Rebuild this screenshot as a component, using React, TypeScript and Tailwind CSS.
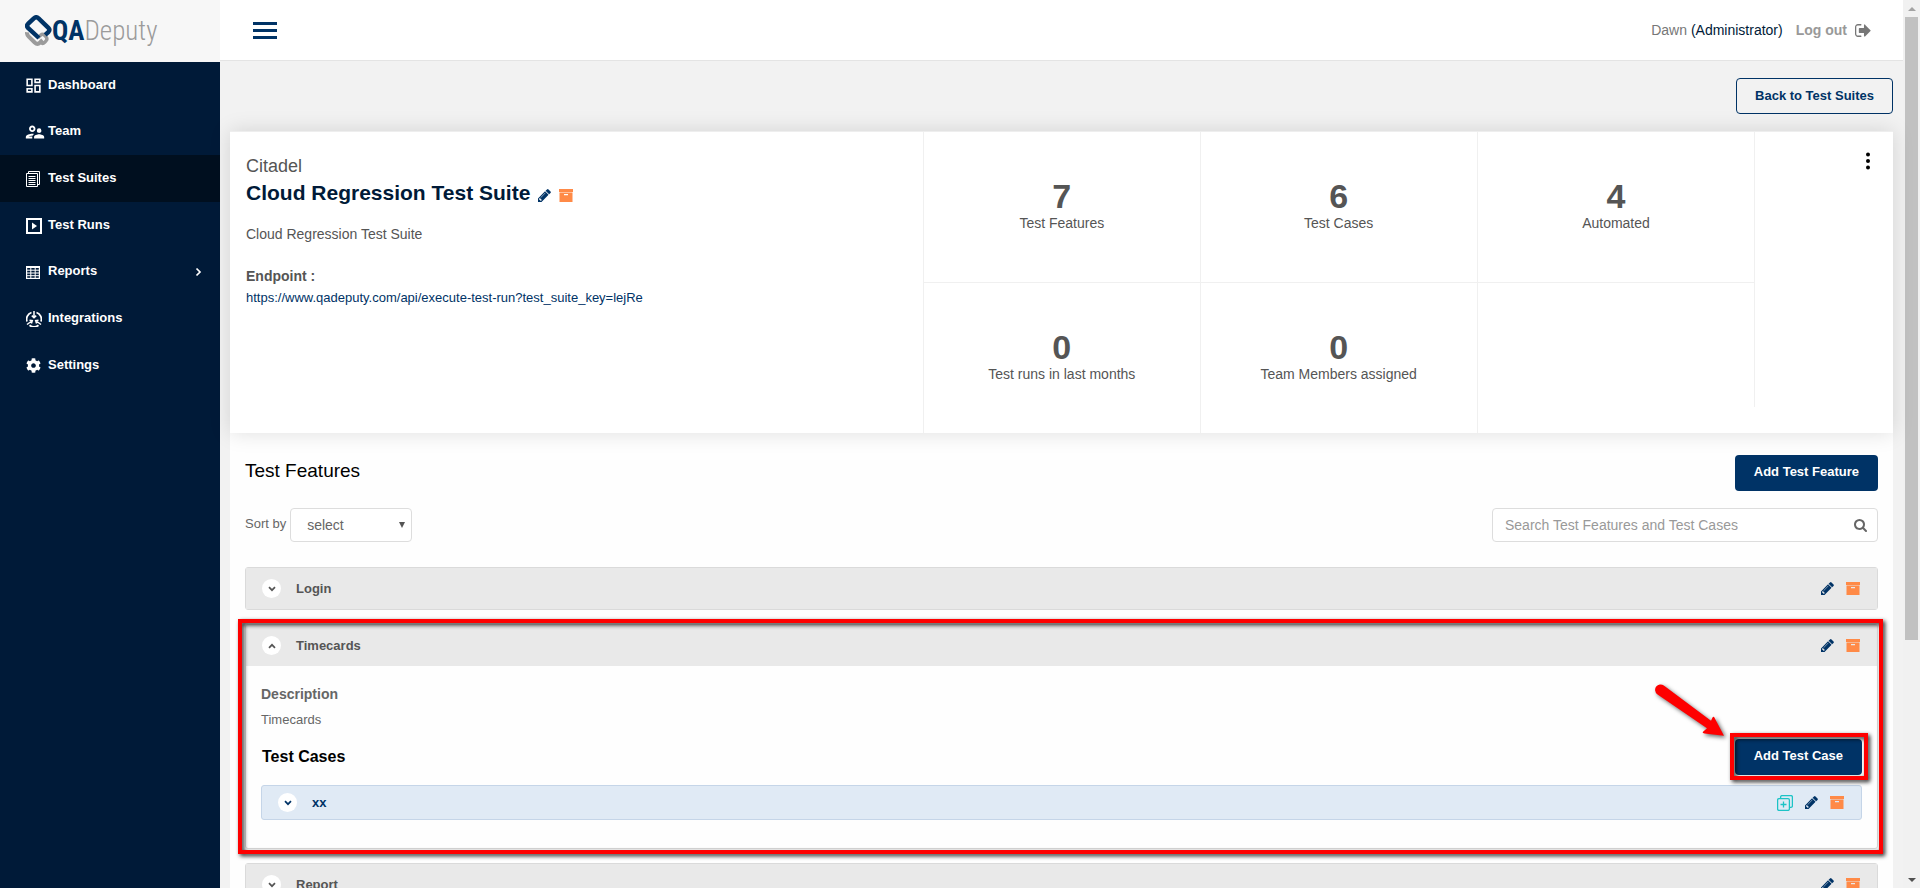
import type { ReactNode } from "react";
import { FaCog } from "react-icons/fa";
import { MdOutlineDashboard, MdOutlineSupervisorAccount } from "react-icons/md";

function PencilIcon() {
  return (
    <svg viewBox="128 140 1536 1536" className="size-[13px] fill-[#003366]" aria-hidden="true">
      <path d="M491 1536l91-91-235-235-91 91v107h128v128h107zm523-928q0-22-22-22-10 0-17 7l-542 542q-7 7-7 17 0 22 22 22 10 0 17-7l542-542q7-7 7-17zm-54-192l416 416-832 832h-416v-416zm683 96q0 53-37 90l-166 166-416-416 166-165q36-38 90-38 53 0 91 38l235 234q37 39 37 91z" />
    </svg>
  );
}

function ArchiveIcon() {
  return (
    <svg viewBox="0 0 14 13" className="h-[13px] w-[14px] fill-[#ff8a47]" aria-hidden="true">
      <path d="M0 0h14v3H0z" />
      <path fillRule="evenodd" d="M.5 4h13v9H.5zM5 5v1.2h4V5z" />
      <path opacity=".55" d="M.5 3h13v1H.5z" />
    </svg>
  );
}

function DuplicateIcon() {
  return (
    <svg viewBox="0 0 16 16" className="size-4 fill-none stroke-[#1cc3c6]" strokeWidth="1.3" aria-hidden="true">
      <rect x=".6" y="3.6" width="11.8" height="11.8" rx="1.4" />
      <path d="M3.6 3.6V2A1.4 1.4 0 0 1 5 .6h9A1.4 1.4 0 0 1 15.4 2v9a1.4 1.4 0 0 1-1.4 1.4h-1.6M6.500 6.500v6M3.500 9.500h6" />
    </svg>
  );
}

function SearchIcon() {
  return (
    <svg viewBox="64 128 1664 1664" className="size-[13px] fill-[#666]" aria-hidden="true">
      <path d="M1216 832q0-185-131.500-316.500t-316.500-131.500-316.500 131.500-131.500 316.500 131.500 316.500 316.500 131.500 316.500-131.500 131.500-316.500zm512 832q0 52-38 90t-90 38q-54 0-90-38l-343-342q-179 124-399 124-143 0-273.500-55.500t-225-150-150-225-55.500-273.500 55.500-273.500 150-225 225-150 273.500-55.500 273.500 55.500 225 150 150 225 55.500 273.500q0 220-124 399l343 343q37 37 37 90z" />
    </svg>
  );
}

function LogoutIcon() {
  return (
    <svg viewBox="64 256 1600 1280" className="h-[13px] w-4 fill-[#777]" aria-hidden="true">
      <path d="M704 1440q0 4 1 20t.5 26.500-3 23.500-10 19.500-20.500 6.500h-320q-119 0-203.500-84.500t-84.500-203.500v-704q0-119 84.500-203.500t203.500-84.500h320q13 0 22.500 9.500t9.500 22.500q0 4 1 20t.5 26.500-3 23.500-10 19.500-20.500 6.500h-320q-66 0-113 47t-47 113v704q0 66 47 113t113 47h312l11.500 1 11.500 3 8 5.500 7 9 2 13.500zm928-544q0 26-19 45l-544 544q-19 19-45 19t-45-19-19-45v-288h-448q-26 0-45-19t-19-45v-384q0-26 19-45t45-19h448v-288q0-26 19-45t45-19 45 19 19 45z" />
    </svg>
  );
}

function SuitesIcon() {
  return (
    <svg viewBox="0 0 15 16" className="h-4 w-[15px] fill-none stroke-white" aria-hidden="true">
      <path d="M2.500 2.500V.5h11v13h-2M.5 2.500h11v13H.5z" />
      <path d="M2.500 5.500h7M2.500 7.500h7M2.500 9.500h7M2.500 11.500h7M2.500 13.500h7" />
    </svg>
  );
}

function RunsIcon() {
  return (
    <svg viewBox="0 0 16 16" className="size-4" aria-hidden="true">
      <rect x="1" y="1" width="14" height="14" fill="none" stroke="#fff" strokeWidth="2" />
      <path d="M6 4.500v7L11 8z" fill="#fff" />
    </svg>
  );
}

function ReportsIcon() {
  return (
    <svg viewBox="0 0 14 13" className="h-[13px] w-[14px] fill-none stroke-white" aria-hidden="true">
      <rect x=".6" y=".6" width="12.800" height="11.800" strokeWidth="1.200" />
      <path d="M0 1.200h14" strokeWidth="1.600" />
      <path d="M0 4.200h14M0 7h14M0 9.700h14M4.800 1v12M9.200 1v12" />
    </svg>
  );
}

function IntegrationsIcon() {
  return (
    <svg viewBox="0 0 16 16" className="size-4 fill-none stroke-white" strokeWidth="1.800" aria-hidden="true">
      <path d="M1 10.500A7 7 0 0 1 5.500 1.500M10.500 1.500A7 7 0 0 1 15 10.500M3.500 14.200a7.200 7.200 0 0 0 9 0" />
      <path d="M8 0v6M5.800 4.600 8 6.800l2.200-2.200" strokeWidth="1.500" />
      <path d="M1 13.500 5.800 10M3.500 9.300l2.800.3-.9 2.800M15 13.500 10.200 10M12.500 9.300l-2.800.3.9 2.800" strokeWidth="1.500" />
    </svg>
  );
}

function Chevron({ direction }: { direction: "up" | "down" | "right" }) {
  const paths = { down: "M1 1.200 4 4.200 7 1.200", up: "M1 4.800 4 1.800 7 4.800", right: "M2.500-.5 6 3 2.500 6.500" };
  return (
    <svg viewBox="0 0 8 6" className="h-[6px] w-2 overflow-visible fill-none stroke-current" strokeWidth="1.700" aria-hidden="true">
      <path d={paths[direction]} />
    </svg>
  );
}

function LogoMark() {
  return (
    <svg viewBox="0 0 27 32" className="h-8 w-[27px] fill-none" aria-hidden="true">
      <path
        d="M2 17.200c-.2 1.700.3 2.900 1.500 4.100l6.200 6.200c1.600 1.500 3.700 1.600 5.200.1l2.700-2.600"
        stroke="#9b9b9b"
        strokeWidth="4"
      />
      <path
        d="M12.800 22.800l2.800-2.600c1.200-1.100 2.600-1.100 3.800 0l1.600 1.700c1.200 1.300 1.200 2.700 0 4l-1.300 1.400c-1.200 1.200-2.700 1.300-3.900.2l-1.600-1.500"
        stroke="#9b9b9b"
        strokeWidth="3.400"
      />
      <path
        d="M14 23 3 12.900c-1.100-1.200-1.100-2.800 0-4L8.800 3.300c1.500-1.300 3.300-1.300 4.800 0l9.800 9.500c1.300 1.300 1.300 2.700.1 4.100l-3.300 3"
        stroke="#003366"
        strokeWidth="4.400"
      />
    </svg>
  );
}

const navItems: { label: string; icon: ReactNode; active?: boolean; expandable?: boolean }[] = [
  { label: "Dashboard", icon: <MdOutlineDashboard className="-ml-0.5 size-[19px]" /> },
  { label: "Team", icon: <MdOutlineSupervisorAccount className="-ml-0.5 size-[22px] shrink-0" /> },
  { label: "Test Suites", icon: <SuitesIcon />, active: true },
  { label: "Test Runs", icon: <RunsIcon /> },
  { label: "Reports", icon: <ReportsIcon />, expandable: true },
  { label: "Integrations", icon: <IntegrationsIcon /> },
  { label: "Settings", icon: <FaCog className="size-[15px]" /> },
];

const stats = [
  { value: 7, label: "Test Features" },
  { value: 6, label: "Test Cases" },
  { value: 4, label: "Automated" },
  { value: 0, label: "Test runs in last months" },
  { value: 0, label: "Team Members assigned" },
];

function Sidebar() {
  return (
    <aside className="w-[220px] shrink-0 bg-[#001a38]">
      <a href="#home" aria-label="QADeputy" className="flex h-[62px] items-center bg-[#f7f7f7] pl-[25px]">
        <LogoMark />
        <span className="font-['Roboto_Condensed','Liberation_Sans_Narrow',sans-serif] text-[27px] leading-8 font-light whitespace-nowrap text-[#9b9b9b]">
          <b className="font-bold text-[#003366]">QA</b>Deputy
        </span>
      </a>
      <nav className="flex h-[327px] flex-col">
        {navItems.map((item) => (
          <a
            key={item.label}
            href={`#${item.label}`}
            className={`flex flex-1 items-center pr-[18px] pl-[26px] text-[13px] font-bold text-white ${item.active ? "bg-[#000f1f]" : ""}`}
          >
            <span className="flex w-[22px] items-center">{item.icon}</span>
            <span className="pb-0.5">{item.label}</span>
            {item.expandable && (
              <span className="ml-auto">
                <Chevron direction="right" />
              </span>
            )}
          </a>
        ))}
      </nav>
    </aside>
  );
}

function EditActions({ duplicate }: { duplicate?: boolean }) {
  return (
    <div className="ml-auto flex items-center gap-3">
      {duplicate && (
        <button type="button" aria-label="Duplicate">
          <DuplicateIcon />
        </button>
      )}
      <button type="button" aria-label="Edit">
        <PencilIcon />
      </button>
      <button type="button" aria-label="Archive">
        <ArchiveIcon />
      </button>
    </div>
  );
}

function FeatureHeader({ name, open }: { name: string; open?: boolean }) {
  return (
    <div className="flex h-[41px] items-center bg-[#e9e9e9] pr-[17px] pl-4 text-[#555]">
      <button type="button" aria-label={`Toggle ${name}`} className="grid size-[19px] place-items-center rounded-full bg-white">
        <Chevron direction={open ? "up" : "down"} />
      </button>
      <h3 className="ml-[15px] text-[13px] font-bold">{name}</h3>
      <EditActions />
    </div>
  );
}

function Feature({ name, open, children }: { name: string; open?: boolean; children?: ReactNode }) {
  return (
    <article className="relative rounded-[3px] border border-[#dadada]">
      <FeatureHeader name={name} open={open} />
      {children}
    </article>
  );
}

function SuiteSummary() {
  return (
    <section className="relative grid grid-cols-12 border-t border-[#eee] bg-white shadow-[0_0_20px_rgba(0,0,0,0.13)]">
      <div className="col-span-5 pt-[21px] pl-4 text-sm leading-5 text-[#555]">
        <p className="text-lg leading-[26px]">Citadel</p>
        <div className="flex items-center gap-2">
          <h1 className="text-[21px] leading-7 font-bold text-[#001a38]">Cloud Regression Test Suite</h1>
          <button type="button" aria-label="Edit suite" className="pt-1">
            <PencilIcon />
          </button>
          <button type="button" aria-label="Archive suite" className="pt-1">
            <ArchiveIcon />
          </button>
        </div>
        <p className="mt-[17px]">Cloud Regression Test Suite</p>
        <p className="mt-[22px] font-bold">Endpoint :</p>
        <a href="#endpoint" className="mt-0.5 block text-[13px] text-[#003366]">
          https://www.qadeputy.com/api/execute-test-run?test_suite_key=lejRe
        </a>
      </div>
      <div className="col-span-6 grid grid-cols-3 grid-rows-[151px_150px] border-l border-[#f0f0f0]">
        {stats.map((stat, index) => (
          <div
            key={stat.label}
            className={`flex flex-col items-center justify-center border-[#f0f0f0] pb-0.5 text-[#555] ${index < 3 ? "border-b" : ""} ${index === 2 ? "" : "border-r"}`}
          >
            <strong className="text-[34px] leading-[34px]">{stat.value}</strong>
            <span className="text-sm leading-5">{stat.label}</span>
          </div>
        ))}
      </div>
      <div className="h-[275px] border-l border-[#f0f0f0] pt-5 pr-[19px]">
        <button type="button" aria-label="More actions" className="ml-auto block px-1">
          <svg viewBox="0 0 4 18" className="h-[18px] w-1" aria-hidden="true">
            <circle cx="2" cy="2.500" r="2" />
            <circle cx="2" cy="9" r="2" />
            <circle cx="2" cy="15.500" r="2" />
          </svg>
        </button>
      </div>
    </section>
  );
}

const primaryButton = "h-9 rounded-[4px] bg-[#003366] px-[19px] pb-0.5 text-[13px] font-bold text-white";

function AddTestCase() {
  return (
    <div className="relative ml-auto">
      <button type="button" className={primaryButton}>
        Add Test Case
      </button>
      <div className="pointer-events-none absolute -top-1.5 -right-1.5 -bottom-[5px] -left-[5px] border-4 border-[#fe0000] drop-shadow-[2px_2px_2px_rgba(0,0,0,0.85)]" />
      <svg
        viewBox="0 0 76 60"
        className="pointer-events-none absolute -top-14 -left-[81px] h-[60px] w-[76px] overflow-visible fill-[#fe0000] drop-shadow-[2px_2px_2px_rgba(0,0,0,0.6)]"
        aria-hidden="true"
      >
        <path d="M9.800 2.600 57 37.700l1.500-3.200c.6-1 1.700-.9 2 .2L70 52.700 50.500 50.400c-1.600-.2-2.400-1-1.200-2L53 45.300 3.200 11.200A5.300 5.300 0 0 1 9.800 2.600Z" />
      </svg>
    </div>
  );
}

function FeatureList() {
  return (
    <section className="flex-1 bg-[#fefefe] pt-[22px] pr-[15px] pl-[15px]">
      <div className="flex items-center justify-between">
        <h2 className="pb-1 text-[19px] leading-6 text-black">Test Features</h2>
        <button type="button" className={primaryButton}>
          Add Test Feature
        </button>
      </div>
      <div className="mt-[17px] flex justify-between">
        <div className="flex items-center">
          <label htmlFor="sort" className="pb-0.5 text-[13px] text-[#666]">
            Sort by
          </label>
          <div className="relative ml-1">
            <select
              id="sort"
              className="h-[34px] w-[122px] appearance-none rounded-[4px] border border-[#ddd] bg-white pl-4 text-sm text-[#666]"
            >
              <option>select</option>
            </select>
            <svg viewBox="0 0 6 6" className="pointer-events-none absolute top-[14px] right-[7px] size-1.5 fill-[#555]" aria-hidden="true">
              <path d="M0 0h6L3 6z" />
            </svg>
          </div>
        </div>
        <div className="flex h-[34px] w-[386px] items-center rounded-[4px] border border-[#ddd] bg-white pr-[10px] pl-3">
          <input
            type="text"
            aria-label="Search Test Features and Test Cases"
            placeholder="Search Test Features and Test Cases"
            className="min-w-0 flex-1 text-sm outline-none placeholder:text-[#999]"
          />
          <button type="button" aria-label="Search">
            <SearchIcon />
          </button>
        </div>
      </div>
      <div className="mt-[25px] flex flex-col gap-[14px]">
        <Feature name="Login" />
        <Feature name="Timecards" open>
          <div className="px-[15px] pt-[18px] pb-7 text-[#666]">
            <h4 className="text-sm leading-5 font-bold">Description</h4>
            <p className="mt-1.5 text-[13px] leading-5">Timecards</p>
            <div className="mt-[9px] flex items-center">
              <h4 className="pl-px text-base font-bold text-black">Test Cases</h4>
              <AddTestCase />
            </div>
            <div className="mt-2.5 flex h-[35px] items-center rounded-[3px] border border-[#c5d5e8] bg-[#e0eaf5] pr-[17px] pl-4 text-[#003366]">
              <button type="button" aria-label="Toggle xx" className="grid size-[19px] place-items-center rounded-full bg-white">
                <Chevron direction="down" />
              </button>
              <span className="ml-[15px] text-[13px] font-bold">xx</span>
              <EditActions duplicate />
            </div>
          </div>
          <div className="pointer-events-none absolute -top-1.5 -right-1.5 -bottom-1.5 -left-2 border-4 border-[#fe0000] drop-shadow-[2px_2px_2px_rgba(0,0,0,0.85)]" />
        </Feature>
        <Feature name="Report" />
      </div>
    </section>
  );
}

function ScrollRail() {
  return (
    <div className="flex w-[17px] shrink-0 flex-col items-center justify-between bg-[#f1f1f1]" aria-hidden="true">
      <div className="grid h-[17px] place-items-center">
        <svg viewBox="0 0 8 4" className="h-1 w-2 fill-[#a3a3a3]">
          <path d="M0 4h8L4 0z" />
        </svg>
      </div>
      <div className="min-h-0 flex-1">
        <div className="h-[73%] w-[13px] bg-[#c1c1c1]" />
      </div>
      <div className="grid h-[17px] place-items-center">
        <svg viewBox="0 0 8 4" className="h-1 w-2 fill-[#505050]">
          <path d="M0 0h8L4 4z" />
        </svg>
      </div>
    </div>
  );
}

export default function App() {
  return (
    <div className="flex h-screen overflow-hidden bg-[#f2f2f2] font-['Liberation_Sans',Arial,sans-serif]">
      <Sidebar />
      <div className="flex min-w-0 flex-1 flex-col">
        <header className="flex h-[61px] shrink-0 items-center border-b border-[#e4e4e4] bg-white pr-8 pl-[33px] text-sm">
          <button type="button" aria-label="Toggle menu" className="flex flex-col gap-1">
            <span className="h-[3px] w-6 bg-[#003366]" />
            <span className="h-[3px] w-6 bg-[#003366]" />
            <span className="h-[3px] w-6 bg-[#003366]" />
          </button>
          <p className="ml-auto text-[#777]">
            Dawn <span className="text-[#001a38]">(Administrator)</span>
          </p>
          <a href="#logout" className="ml-[13px] flex items-center gap-2 font-bold text-[#999]">
            Log out
            <LogoutIcon />
          </a>
        </header>
        <main className="flex min-h-0 flex-1 flex-col px-2.5 pt-[17px]">
          <a
            href="#suites"
            className="mb-[17px] flex h-9 shrink-0 items-center self-end rounded-[4px] border border-[#003366] px-[18px] text-[13px] font-bold text-[#003366]"
          >
            Back to Test Suites
          </a>
          <SuiteSummary />
          <FeatureList />
        </main>
      </div>
      <ScrollRail />
    </div>
  );
}
